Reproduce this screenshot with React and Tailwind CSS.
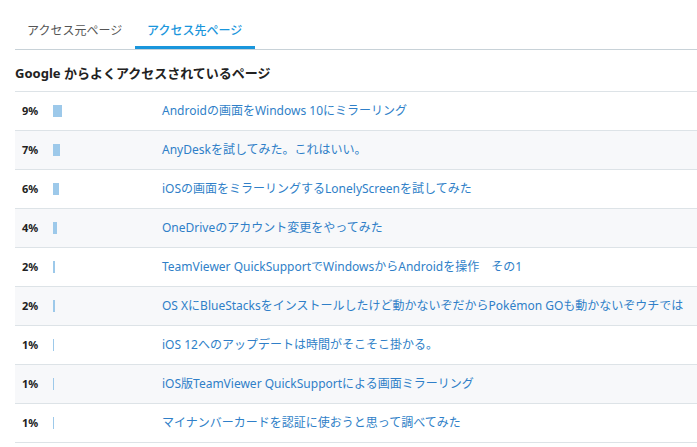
import React from 'react';

const rows = [
  { pct: 9, title: 'Androidの画面をWindows 10にミラーリング' },
  { pct: 7, title: 'AnyDeskを試してみた。これはいい。' },
  { pct: 6, title: 'iOSの画面をミラーリングするLonelyScreenを試してみた' },
  { pct: 4, title: 'OneDriveのアカウント変更をやってみた' },
  { pct: 2, title: 'TeamViewer QuickSupportでWindowsからAndroidを操作　その1' },
  { pct: 2, title: 'OS XにBlueStacksをインストールしたけど動かないぞだからPokémon GOも動かないぞウチでは' },
  { pct: 1, title: 'iOS 12へのアップデートは時間がそこそこ掛かる。' },
  { pct: 1, title: 'iOS版TeamViewer QuickSupportによる画面ミラーリング' },
  { pct: 1, title: 'マイナンバーカードを認証に使おうと思って調べてみた' },
];

const App = () => {
  return (
    <div
      className="w-[697px] h-[447px] overflow-hidden bg-white pl-[15px] text-[#222]"
      style={{ fontFamily: '"Noto Sans", "Noto Sans CJK JP", sans-serif' }}
    >
      {/* Tabs */}
      <div className="flex pt-[20px] border-b border-[#c8d2d8]">
        <div className="w-[120px] pl-[12px] pb-[8px] text-[12px] leading-[21px] text-[#555] whitespace-nowrap">
          アクセス元ページ
        </div>
        <div className="w-[120px] pl-[12px] pb-[5px] text-[12px] leading-[21px] text-[#1a96dc] font-medium border-b-[3px] border-[#1a96dc] whitespace-nowrap">
          アクセス先ページ
        </div>
      </div>

      <h2 className="text-[13px] font-bold leading-[20px] pt-[13px] pb-[8px] text-[#222]">
        Google からよくアクセスされているページ
      </h2>

      <div className="border-t border-[#dde3e7]">
        {rows.map((r, i) => (
          <div
            key={i}
            className={`flex items-center h-[39px] border-b border-[#dde3e7] ${i % 2 === 1 ? 'bg-[#f7f8fa]' : 'bg-white'}`}
          >
            <div className="w-[38px] pl-[7px] text-[11px] font-bold text-[#222]">{r.pct}%</div>
            <div className="w-[109px] flex items-center">
              <div className="h-[12px] bg-[#9dc9ea]" style={{ width: `${r.pct}px` }} />
            </div>
            <a className="text-[12px] text-[#2f7fc8] whitespace-nowrap">{r.title}</a>
          </div>
        ))}
      </div>
    </div>
  );
};

export default App;
